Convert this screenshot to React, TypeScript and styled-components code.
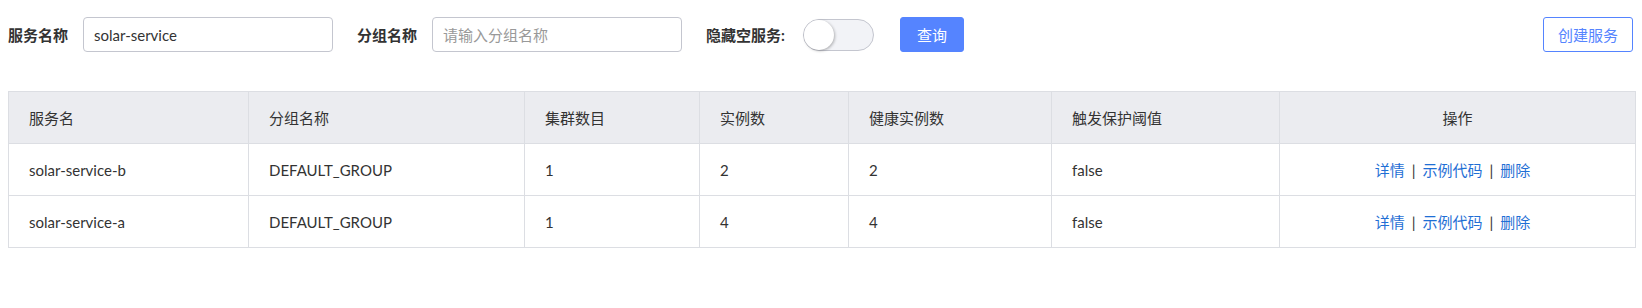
import React from "react";
import styled, { createGlobalStyle } from "styled-components";

const GlobalStyle = createGlobalStyle`
  html, body { margin: 0; padding: 0; background: #ffffff; }
  body {
    font-family: "Lato", "Noto Sans CJK SC", sans-serif;
    font-size: 15px;
    color: #333333;
  }
  * { box-sizing: border-box; }
`;

const Page = styled.div`
  padding: 17px 6px 0 8px;
`;

const Toolbar = styled.div`
  display: flex;
  align-items: center;
  height: 35px;
  padding-right: 3px;
`;

const FormItem = styled.div<{ $after?: number }>`
  display: flex;
  align-items: center;
  margin-right: ${(p) => p.$after ?? 24}px;
`;

const Label = styled.label<{ $gap?: number }>`
  font-weight: 700;
  color: #333333;
  margin-right: ${(p) => p.$gap ?? 15}px;
  white-space: nowrap;
  line-height: 20px;
`;

const TextInput = styled.input`
  width: 250px;
  height: 35px;
  border: 1px solid #c4c6cf;
  border-radius: 4px;
  padding: 0 10px;
  font-family: inherit;
  font-size: 15px;
  color: #333333;
  outline: none;
  background: #ffffff;
  &::placeholder { color: #999999; }
`;

const SwitchTrack = styled.div<{ $on?: boolean }>`
  position: relative;
  width: 71px;
  height: 32px;
  border-radius: 16px;
  border: 1px solid #c4c6cf;
  background: ${(p) => (p.$on ? "#5584ff" : "#f2f3f7")};
  align-self: flex-start;
  cursor: pointer;
`;

const SwitchKnob = styled.span<{ $on?: boolean }>`
  position: absolute;
  top: 0;
  left: ${(p) => (p.$on ? "39px" : "0")};
  width: 30px;
  height: 30px;
  border-radius: 50%;
  background: #ffffff;
  box-shadow: 1px 1px 3px rgba(0, 0, 0, 0.28);
`;

const Button = styled.button<{ $primary?: boolean; $pad: number }>`
  height: 35px;
  padding: 0 ${(p) => p.$pad}px;
  border-radius: 3px;
  border: 1px solid #5584ff;
  background: ${(p) => (p.$primary ? "#5584ff" : "#ffffff")};
  color: ${(p) => (p.$primary ? "#ffffff" : "#5584ff")};
  font-family: inherit;
  font-size: 15px;
  line-height: 20px;
  cursor: pointer;
  white-space: nowrap;
`;

const Spacer = styled.div`
  flex: 1;
`;

const Table = styled.table`
  margin-top: 39px;
  width: 100%;
  border-collapse: collapse;
  table-layout: fixed;
  border: 1px solid #dcdee3;
`;

const HeadCell = styled.th<{ $center?: boolean }>`
  height: 52px;
  padding: 0 20px;
  background: #ebecf0;
  border: 1px solid #dcdee3;
  font-weight: 400;
  text-align: ${(p) => (p.$center ? "center" : "left")};
  color: #333333;
  line-height: 20px;
`;

const Cell = styled.td<{ $actions?: boolean }>`
  height: 52px;
  padding: ${(p) => (p.$actions ? "0 30px 0 20px" : "0 20px")};
  border: 1px solid #dcdee3;
  text-align: ${(p) => (p.$actions ? "center" : "left")};
  color: #333333;
  line-height: 20px;
`;

const Link = styled.a`
  color: #1f6fd5;
  text-decoration: none;
  cursor: pointer;
`;

const Sep = styled.span`
  display: inline-block;
  margin: 0 7px;
  color: #333333;
`;

const columns = [
  { title: "服务名", width: 240 },
  { title: "分组名称", width: 276 },
  { title: "集群数目", width: 175 },
  { title: "实例数", width: 149 },
  { title: "健康实例数", width: 203 },
  { title: "触发保护阈值", width: 228 },
  { title: "操作", width: undefined as number | undefined, center: true },
];

const rows = [
  { name: "solar-service-b", group: "DEFAULT_GROUP", clusters: 1, instances: 2, healthy: 2, threshold: "false" },
  { name: "solar-service-a", group: "DEFAULT_GROUP", clusters: 1, instances: 4, healthy: 4, threshold: "false" },
];

export default function App() {
  return (
    <Page>
      <GlobalStyle />
      <Toolbar>
        <FormItem>
          <Label>服务名称</Label>
          <TextInput defaultValue="solar-service" />
        </FormItem>
        <FormItem>
          <Label>分组名称</Label>
          <TextInput placeholder="请输入分组名称" />
        </FormItem>
        <FormItem $after={26}>
          <Label $gap={18}>隐藏空服务:</Label>
          <SwitchTrack>
            <SwitchKnob />
          </SwitchTrack>
        </FormItem>
        <Button $primary $pad={16}>查询</Button>
        <Spacer />
        <Button $pad={14}>创建服务</Button>
      </Toolbar>
      <Table>
        <colgroup>
          {columns.map((c, i) => (
            <col key={i} style={c.width ? { width: c.width } : undefined} />
          ))}
        </colgroup>
        <thead>
          <tr>
            {columns.map((c, i) => (
              <HeadCell key={i} $center={c.center}>{c.title}</HeadCell>
            ))}
          </tr>
        </thead>
        <tbody>
          {rows.map((r) => (
            <tr key={r.name}>
              <Cell>{r.name}</Cell>
              <Cell>{r.group}</Cell>
              <Cell>{r.clusters}</Cell>
              <Cell>{r.instances}</Cell>
              <Cell>{r.healthy}</Cell>
              <Cell>{r.threshold}</Cell>
              <Cell $actions>
                <Link>详情</Link>
                <Sep>|</Sep>
                <Link>示例代码</Link>
                <Sep>|</Sep>
                <Link>删除</Link>
              </Cell>
            </tr>
          ))}
        </tbody>
      </Table>
    </Page>
  );
}
